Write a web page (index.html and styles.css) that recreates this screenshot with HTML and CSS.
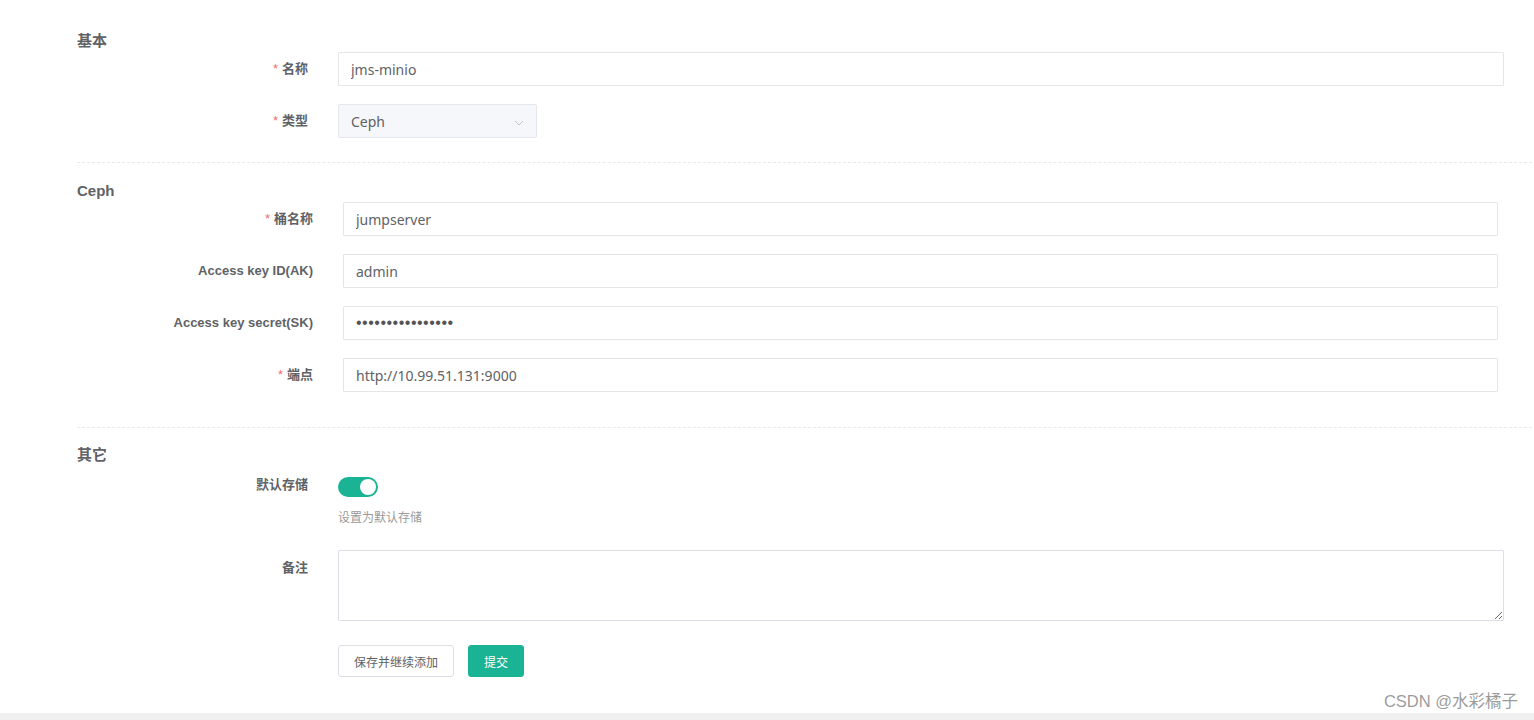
FILE: index.html
```html
<!DOCTYPE html>
<html lang="zh-CN">
<head>
<meta charset="utf-8">
<title>存储配置</title>
<link rel="stylesheet" href="styles.css">
</head>
<body>
<div class="page">
  <form class="form">
    <div class="section sec-basic">
      <div class="sec-title">基本</div>
      <div class="row">
        <label class="label"><span class="req">*</span>名称</label>
        <div class="field"><input class="input" type="text" value="jms-minio"></div>
      </div>
      <div class="row">
        <label class="label"><span class="req">*</span>类型</label>
        <div class="field">
          <div class="select">
            <span>Ceph</span>
            <svg class="arrow" width="10" height="6" viewBox="0 0 10 6"><path d="M1 1 L5 5 L9 1" fill="none" stroke="#c0c4cc" stroke-width="1"/></svg>
          </div>
        </div>
      </div>
    </div>
    <div class="divider"></div>
    <div class="section sec-ceph">
      <div class="sec-title">Ceph</div>
      <div class="row">
        <label class="label"><span class="req">*</span>桶名称</label>
        <div class="field"><input class="input" type="text" value="jumpserver"></div>
      </div>
      <div class="row">
        <label class="label">Access key ID(AK)</label>
        <div class="field"><input class="input" type="text" value="admin"></div>
      </div>
      <div class="row">
        <label class="label">Access key secret(SK)</label>
        <div class="field"><input class="input pwd" type="text" value="••••••••••••••••"></div>
      </div>
      <div class="row">
        <label class="label"><span class="req">*</span>端点</label>
        <div class="field"><input class="input" type="text" value="http://10.99.51.131:9000"></div>
      </div>
    </div>
    <div class="divider divider2"></div>
    <div class="section sec-other">
      <div class="sec-title">其它</div>
      <div class="row row-switch">
        <label class="label">默认存储</label>
        <div class="field">
          <div class="switch"><span class="knob"></span></div>
          <div class="help">设置为默认存储</div>
        </div>
      </div>
      <div class="row row-text">
        <label class="label">备注</label>
        <div class="field"><textarea class="textarea"></textarea></div>
      </div>
      <div class="row row-btn">
        <div class="label"></div>
        <div class="field buttons">
          <button type="button" class="btn btn-default">保存并继续添加</button>
          <button type="button" class="btn btn-primary">提交</button>
        </div>
      </div>
    </div>
  </form>
</div>
<div class="watermark">CSDN @水彩橘子</div>
</body>
</html>
```

FILE: styles.css
```css
html, body {
  margin: 0;
  padding: 0;
}
body {
  background: #f0f0f0;
  font-family: "Liberation Sans", "Noto Sans CJK SC", sans-serif;
  color: #606266;
  width: 1534px;
  height: 720px;
  overflow: hidden;
  position: relative;
}
.page {
  background: #fff;
  height: 713px;
  box-sizing: border-box;
  padding: 31px 2px 0 77px;
}
.form {
  display: flow-root;
}
.section {
  display: flow-root;
}
.sec-title {
  height: 20px;
  line-height: 20px;
  font-size: 15px;
  font-weight: bold;
  color: #606266;
}
.sec-basic .sec-title { margin-bottom: 1px; }
.sec-ceph .sec-title { padding-top: 1px; margin-bottom: 1px; }
.sec-other .sec-title { margin-bottom: 3px; }
.row {
  display: grid;
  grid-template-columns: 231px 1fr;
  column-gap: 30px;
  margin-bottom: 18px;
}
.sec-basic .row { padding-right: 28px; }
.sec-ceph .row { grid-template-columns: 236px 1fr; padding-right: 34px; }
.sec-other .row { padding-right: 28px; }
.row:last-child { margin-bottom: 0; }
.label {
  text-align: right;
  font-size: 13px;
  font-weight: bold;
  line-height: 34px;
  color: #606266;
}
.req {
  color: #f56c6c;
  margin-right: 4px;
  font-weight: normal;
}
.input {
  display: block;
  box-sizing: border-box;
  width: 100%;
  height: 34px;
  border: 1px solid #e5e6e7;
  border-radius: 1px;
  padding: 0 12px;
  font-family: "Noto Sans", "Noto Sans CJK SC", sans-serif;
  font-size: 14px;
  color: #606266;
  background: #fff;
  outline: none;
}
.pwd {
  font-family: "Liberation Sans", sans-serif;
  font-size: 16px;
  letter-spacing: 0.5px;
  color: #555;
}
.select {
  box-sizing: border-box;
  width: 199px;
  height: 34px;
  background: #f5f7fa;
  border: 1px solid #e4e7ed;
  border-radius: 2px;
  display: flex;
  align-items: center;
  justify-content: space-between;
  padding: 0 12px 0 12px;
  font-family: "Noto Sans", sans-serif;
  font-size: 14px;
  color: #606266;
}
.arrow { margin-top: 3px; }
.divider {
  border-top: 1px dashed #e7eaec;
  margin: 24px 0 17px;
}
.divider2 { margin: 35px 0 17px; }
.row-switch { margin-bottom: 22px; }
.switch {
  width: 40px;
  height: 20px;
  border-radius: 10px;
  background: #1ab394;
  position: relative;
  margin-top: 9px;
}
.knob {
  position: absolute;
  top: 2px;
  right: 2px;
  width: 16px;
  height: 16px;
  border-radius: 50%;
  background: #fff;
}
.help {
  font-size: 12px;
  color: #999;
  line-height: 20px;
  margin-top: 11px;
}
.row-text { margin-bottom: 24px; }
.row-text .label { line-height: 36px; }
.textarea {
  display: block;
  box-sizing: border-box;
  width: 100%;
  height: 71px;
  border: 1px solid #dcdfe6;
  border-radius: 1px;
  resize: vertical;
  outline: none;
  font-family: "Noto Sans", sans-serif;
}
.buttons {
  display: flex;
  gap: 14px;
}
.btn {
  height: 32px;
  box-sizing: border-box;
  border-radius: 3px;
  font-family: "Liberation Sans", "Noto Sans CJK SC", sans-serif;
  font-size: 12px;
  padding: 0;
  cursor: pointer;
}
.btn-default {
  width: 116px;
  background: #fff;
  border: 1px solid #dcdfe6;
  color: #606266;
}
.btn-primary {
  width: 56px;
  background: #1ab394;
  border: 1px solid #1ab394;
  color: #fff;
}
.watermark {
  position: absolute;
  right: 16px;
  bottom: 9px;
  font-family: "Liberation Sans", "Noto Sans CJK SC", sans-serif;
  font-size: 16.5px;
  color: rgba(120, 120, 120, 0.75);
  line-height: 20px;
}
```
